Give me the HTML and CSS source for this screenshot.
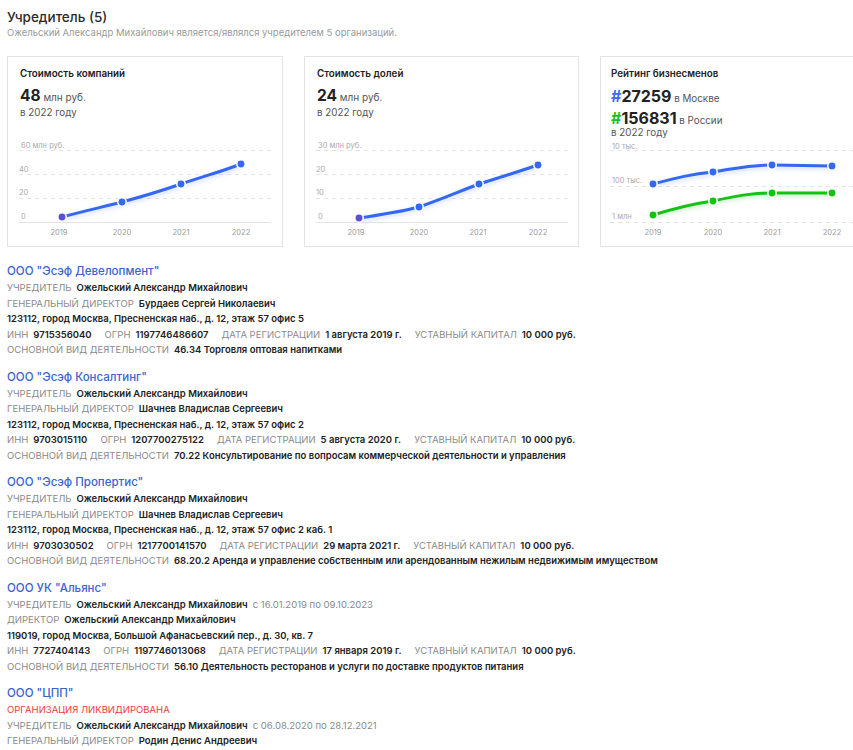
FILE: index.html
```html
<!DOCTYPE html>
<html lang="ru">
<head>
<meta charset="utf-8">
<title>Учредитель</title>
<link rel="stylesheet" href="styles.css">
</head>
<body>
<h1 class="title">Учредитель (5)</h1>
<p class="subtitle">Ожельский Александр Михайлович является/являлся учредителем 5 организаций.</p>

<div class="cards">
  <div class="card">
    <div class="card-head">
      <div class="card-title">Стоимость компаний</div>
      <div class="big"><b>48</b> млн руб.</div>
      <div class="year">в 2022 году</div>
    </div>
    <svg class="chart" width="274" height="108" viewBox="0 0 274 108">
      <defs>
        <filter id="sh1" x="-10%" y="-30%" width="120%" height="160%"><feDropShadow dx="0" dy="2" stdDeviation="2" flood-color="#3b6cf6" flood-opacity="0.25"/></filter>
      </defs>
      <g class="grid">
        <line x1="11" y1="12.5" x2="263" y2="12.5"/>
        <line x1="11" y1="36.5" x2="263" y2="36.5"/>
        <line x1="11" y1="60.5" x2="263" y2="60.5"/>
      </g>
      <line class="axis" x1="11" y1="84.5" x2="263" y2="84.5"/>
      <g class="lbl">
        <text x="13" y="10">60 млн руб.</text>
        <text x="11" y="34">40</text>
        <text x="11" y="57">20</text>
        <text x="13" y="81">0</text>
      </g>
      <g class="xl">
        <text x="51" y="97">2019</text>
        <text x="114" y="97">2020</text>
        <text x="173" y="97">2021</text>
        <text x="233" y="97">2022</text>
      </g>
      <path class="line blue" filter="url(#sh1)" d="M54 79 C 80 72, 95 69, 114 64 C 140 57, 150 54, 173 46 C 200 37, 215 33, 233 26"/>
      <circle class="dot first" cx="54" cy="79" r="4.2"/>
      <circle class="dot b" cx="114" cy="64" r="4.2"/>
      <circle class="dot b" cx="173" cy="46" r="4.2"/>
      <circle class="dot b" cx="233" cy="26" r="4.2"/>
    </svg>
  </div>

  <div class="card">
    <div class="card-head">
      <div class="card-title">Стоимость долей</div>
      <div class="big"><b>24</b> млн руб.</div>
      <div class="year">в 2022 году</div>
    </div>
    <svg class="chart" width="274" height="108" viewBox="0 0 274 108">
      <defs>
        <filter id="sh2" x="-10%" y="-30%" width="120%" height="160%"><feDropShadow dx="0" dy="2" stdDeviation="2" flood-color="#3b6cf6" flood-opacity="0.25"/></filter>
      </defs>
      <g class="grid">
        <line x1="11" y1="12.5" x2="263" y2="12.5"/>
        <line x1="11" y1="36.5" x2="263" y2="36.5"/>
        <line x1="11" y1="60.5" x2="263" y2="60.5"/>
      </g>
      <line class="axis" x1="11" y1="84.5" x2="263" y2="84.5"/>
      <g class="lbl">
        <text x="13" y="10">30 млн руб.</text>
        <text x="11" y="34">20</text>
        <text x="11" y="57">10</text>
        <text x="13" y="81">0</text>
      </g>
      <g class="xl">
        <text x="51" y="97">2019</text>
        <text x="114" y="97">2020</text>
        <text x="173" y="97">2021</text>
        <text x="233" y="97">2022</text>
      </g>
      <path class="line blue" filter="url(#sh2)" d="M54 80 C 80 76, 95 74, 114 69 C 140 60, 150 55, 174 46 C 200 38, 215 33, 233 27"/>
      <circle class="dot first" cx="54" cy="80" r="4.2"/>
      <circle class="dot b" cx="114" cy="69" r="4.2"/>
      <circle class="dot b" cx="174" cy="46" r="4.2"/>
      <circle class="dot b" cx="233" cy="27" r="4.2"/>
    </svg>
  </div>

  <div class="card card-rank">
    <div class="card-head">
      <div class="card-title">Рейтинг бизнесменов</div>
      <div class="rank"><b><span class="hash-blue">#</span>27259</b> в Москве</div>
      <div class="rank"><b><span class="hash-green">#</span>156831</b> в России</div>
      <div class="year">в 2022 году</div>
    </div>
    <svg class="chart" width="274" height="108" viewBox="0 0 274 108">
      <defs>
        <filter id="sh3" x="-10%" y="-30%" width="120%" height="160%"><feDropShadow dx="0" dy="2" stdDeviation="2" flood-color="#3b6cf6" flood-opacity="0.25"/></filter>
        <filter id="sh4" x="-10%" y="-30%" width="120%" height="160%"><feDropShadow dx="0" dy="2" stdDeviation="2" flood-color="#18c418" flood-opacity="0.25"/></filter>
      </defs>
      <g class="grid">
        <line x1="9" y1="12.5" x2="274" y2="12.5"/>
        <line x1="9" y1="48.5" x2="274" y2="48.5"/>
        <line x1="9" y1="84.5" x2="274" y2="84.5"/>
      </g>
      <g class="lbl">
        <text x="11" y="11">10 тыс.</text>
        <text x="11" y="45">100 тыс.</text>
        <text x="11" y="81">1 млн</text>
      </g>
      <g class="xl">
        <text x="52" y="97">2019</text>
        <text x="112" y="97">2020</text>
        <text x="171" y="97">2021</text>
        <text x="231" y="97">2022</text>
      </g>
      <path class="line blue" filter="url(#sh3)" d="M52 46 C 75 40, 90 36, 112 34 C 135 30, 150 27, 171 27 L 231 28"/>
      <path class="line green" filter="url(#sh4)" d="M52 77 C 75 70, 90 66, 112 63 C 135 58, 150 55, 171 55 L 231 55"/>
      <circle class="dot b" cx="52" cy="46" r="4.2"/>
      <circle class="dot b" cx="112" cy="34" r="4.2"/>
      <circle class="dot b" cx="171" cy="27" r="4.2"/>
      <circle class="dot b" cx="231" cy="28" r="4.2"/>
      <circle class="dot g" cx="52" cy="77" r="4.2"/>
      <circle class="dot g" cx="112" cy="63" r="4.2"/>
      <circle class="dot g" cx="171" cy="55" r="4.2"/>
      <circle class="dot g" cx="231" cy="55" r="4.2"/>
    </svg>
  </div>
</div>

<div class="org">
  <a class="org-name" href="#">ООО "Эсэф Девелопмент"</a>
  <div class="row"><span class="pair"><span class="k">УЧРЕДИТЕЛЬ</span><span class="v">Ожельский Александр Михайлович</span></span></div>
  <div class="row"><span class="pair"><span class="k">ГЕНЕРАЛЬНЫЙ ДИРЕКТОР</span><span class="v">Бурдаев Сергей Николаевич</span></span></div>
  <div class="row"><span class="v">123112, город Москва, Пресненская наб., д. 12, этаж 57 офис 5</span></div>
  <div class="row">
    <span class="pair"><span class="k">ИНН</span><span class="v">9715356040</span></span>
    <span class="pair"><span class="k">ОГРН</span><span class="v">1197746486607</span></span>
    <span class="pair"><span class="k">ДАТА РЕГИСТРАЦИИ</span><span class="v">1 августа 2019 г.</span></span>
    <span class="pair"><span class="k">УСТАВНЫЙ КАПИТАЛ</span><span class="v">10 000 руб.</span></span>
  </div>
  <div class="row"><span class="pair"><span class="k">ОСНОВНОЙ ВИД ДЕЯТЕЛЬНОСТИ</span><span class="v">46.34 Торговля оптовая напитками</span></span></div>
</div>

<div class="org">
  <a class="org-name" href="#">ООО "Эсэф Консалтинг"</a>
  <div class="row"><span class="pair"><span class="k">УЧРЕДИТЕЛЬ</span><span class="v">Ожельский Александр Михайлович</span></span></div>
  <div class="row"><span class="pair"><span class="k">ГЕНЕРАЛЬНЫЙ ДИРЕКТОР</span><span class="v">Шачнев Владислав Сергеевич</span></span></div>
  <div class="row"><span class="v">123112, город Москва, Пресненская наб., д. 12, этаж 57 офис 2</span></div>
  <div class="row">
    <span class="pair"><span class="k">ИНН</span><span class="v">9703015110</span></span>
    <span class="pair"><span class="k">ОГРН</span><span class="v">1207700275122</span></span>
    <span class="pair"><span class="k">ДАТА РЕГИСТРАЦИИ</span><span class="v">5 августа 2020 г.</span></span>
    <span class="pair"><span class="k">УСТАВНЫЙ КАПИТАЛ</span><span class="v">10 000 руб.</span></span>
  </div>
  <div class="row"><span class="pair"><span class="k">ОСНОВНОЙ ВИД ДЕЯТЕЛЬНОСТИ</span><span class="v">70.22 Консультирование по вопросам коммерческой деятельности и управления</span></span></div>
</div>

<div class="org">
  <a class="org-name" href="#">ООО "Эсэф Пропертис"</a>
  <div class="row"><span class="pair"><span class="k">УЧРЕДИТЕЛЬ</span><span class="v">Ожельский Александр Михайлович</span></span></div>
  <div class="row"><span class="pair"><span class="k">ГЕНЕРАЛЬНЫЙ ДИРЕКТОР</span><span class="v">Шачнев Владислав Сергеевич</span></span></div>
  <div class="row"><span class="v">123112, город Москва, Пресненская наб., д. 12, этаж 57 офис 2 каб. 1</span></div>
  <div class="row">
    <span class="pair"><span class="k">ИНН</span><span class="v">9703030502</span></span>
    <span class="pair"><span class="k">ОГРН</span><span class="v">1217700141570</span></span>
    <span class="pair"><span class="k">ДАТА РЕГИСТРАЦИИ</span><span class="v">29 марта 2021 г.</span></span>
    <span class="pair"><span class="k">УСТАВНЫЙ КАПИТАЛ</span><span class="v">10 000 руб.</span></span>
  </div>
  <div class="row"><span class="pair"><span class="k">ОСНОВНОЙ ВИД ДЕЯТЕЛЬНОСТИ</span><span class="v">68.20.2 Аренда и управление собственным или арендованным нежилым недвижимым имуществом</span></span></div>
</div>

<div class="org">
  <a class="org-name" href="#">ООО УК "Альянс"</a>
  <div class="row"><span class="pair"><span class="k">УЧРЕДИТЕЛЬ</span><span class="v">Ожельский Александр Михайлович</span><span class="k">с 16.01.2019 по 09.10.2023</span></span></div>
  <div class="row"><span class="pair"><span class="k">ДИРЕКТОР</span><span class="v">Ожельский Александр Михайлович</span></span></div>
  <div class="row"><span class="v">119019, город Москва, Большой Афанасьевский пер., д. 30, кв. 7</span></div>
  <div class="row">
    <span class="pair"><span class="k">ИНН</span><span class="v">7727404143</span></span>
    <span class="pair"><span class="k">ОГРН</span><span class="v">1197746013068</span></span>
    <span class="pair"><span class="k">ДАТА РЕГИСТРАЦИИ</span><span class="v">17 января 2019 г.</span></span>
    <span class="pair"><span class="k">УСТАВНЫЙ КАПИТАЛ</span><span class="v">10 000 руб.</span></span>
  </div>
  <div class="row"><span class="pair"><span class="k">ОСНОВНОЙ ВИД ДЕЯТЕЛЬНОСТИ</span><span class="v">56.10 Деятельность ресторанов и услуги по доставке продуктов питания</span></span></div>
</div>

<div class="org">
  <a class="org-name" href="#">ООО "ЦПП"</a>
  <div class="row"><span class="liq">ОРГАНИЗАЦИЯ ЛИКВИДИРОВАНА</span></div>
  <div class="row"><span class="pair"><span class="k">УЧРЕДИТЕЛЬ</span><span class="v">Ожельский Александр Михайлович</span><span class="k">с 06.08.2020 по 28.12.2021</span></span></div>
  <div class="row"><span class="pair"><span class="k">ГЕНЕРАЛЬНЫЙ ДИРЕКТОР</span><span class="v">Родин Денис Андреевич</span></span></div>
</div>
</body>
</html>
```

FILE: styles.css
```css
html {
  overflow: hidden;
}
body {
  margin: 8px 0 0 7px;
  font-family: Inter, "Noto Sans", sans-serif;
  color: #222;
  background: #fff;
}
.title {
  margin: 0;
  font-size: 13.5px;
  line-height: 18px;
  font-weight: 500;
  color: #2b2b2b;
}
.subtitle {
  margin: 0;
  font-size: 9.5px;
  line-height: 14px;
  color: #9a9a9a;
}
.cards {
  display: grid;
  grid-template-columns: 276px 275px 275px;
  column-gap: 21px;
  margin-top: 16px;
  margin-bottom: 15px;
  overflow: hidden;
}
.card {
  box-sizing: border-box;
  width: 100%;
  height: 191px;
  border: 1px solid #e3e3e3;
  background: #fff;
}
.card-head {
  height: 81px;
  box-sizing: border-box;
  padding: 11px 12px 0;
}
.card-rank .card-head {
  padding-left: 10px;
}
.card-title {
  font-size: 9.8px;
  line-height: 12px;
  font-weight: 600;
  color: #222;
  margin-bottom: 8px;
}
.big {
  font-size: 10px;
  line-height: 16px;
  color: #555;
}
.big b {
  font-size: 15.5px;
  font-weight: 700;
  color: #222;
}
.year {
  font-size: 9.8px;
  line-height: 13px;
  color: #555;
}
.big + .year {
  margin-top: 1px;
}
.rank {
  font-size: 9.8px;
  line-height: 16px;
  height: 16px;
  margin-bottom: 6px;
  color: #555;
}
.rank b {
  font-size: 16px;
  font-weight: 700;
  color: #222;
}
.hash-blue { color: #3b6cf6; }
.hash-green { color: #1ebe1e; }
.rank + .year { margin-top: -6px; }
.chart {
  display: block;
  overflow: visible;
}
.grid line {
  stroke: #e4e4e4;
  stroke-width: 1;
  stroke-dasharray: 4 4;
}
.axis {
  stroke: #e4e4e4;
  stroke-width: 1;
}
.lbl text {
  font-family: Inter, sans-serif;
  font-size: 7.5px;
  fill: #aaaaaa;
}
.xl text {
  font-family: Inter, sans-serif;
  font-size: 7.5px;
  fill: #9a9a9a;
  text-anchor: middle;
}
.line {
  fill: none;
  stroke-width: 3;
  stroke-linecap: round;
}
.line.blue { stroke: #3468f2; }
.line.green { stroke: #14c214; }
.dot {
  stroke: #fff;
  stroke-width: 1.5;
}
.dot.b { fill: #3468f2; }
.dot.first { fill: #5a4fd6; }
.dot.g { fill: #14c214; }

.org {
  margin-bottom: 10px;
}
.org-name {
  display: block;
  font-size: 11.5px;
  line-height: 18px;
  font-weight: 500;
  color: #3a62d0;
  text-decoration: none;
}
.row {
  display: flex;
  gap: 13px;
  font-size: 9.5px;
  line-height: 15.5px;
  white-space: nowrap;
}
.pair {
  display: flex;
  gap: 5px;
}
.k {
  color: #8a8a8a;
}
.v {
  color: #222;
  font-weight: 600;
}
.liq {
  color: #f23a3a;
}
```
